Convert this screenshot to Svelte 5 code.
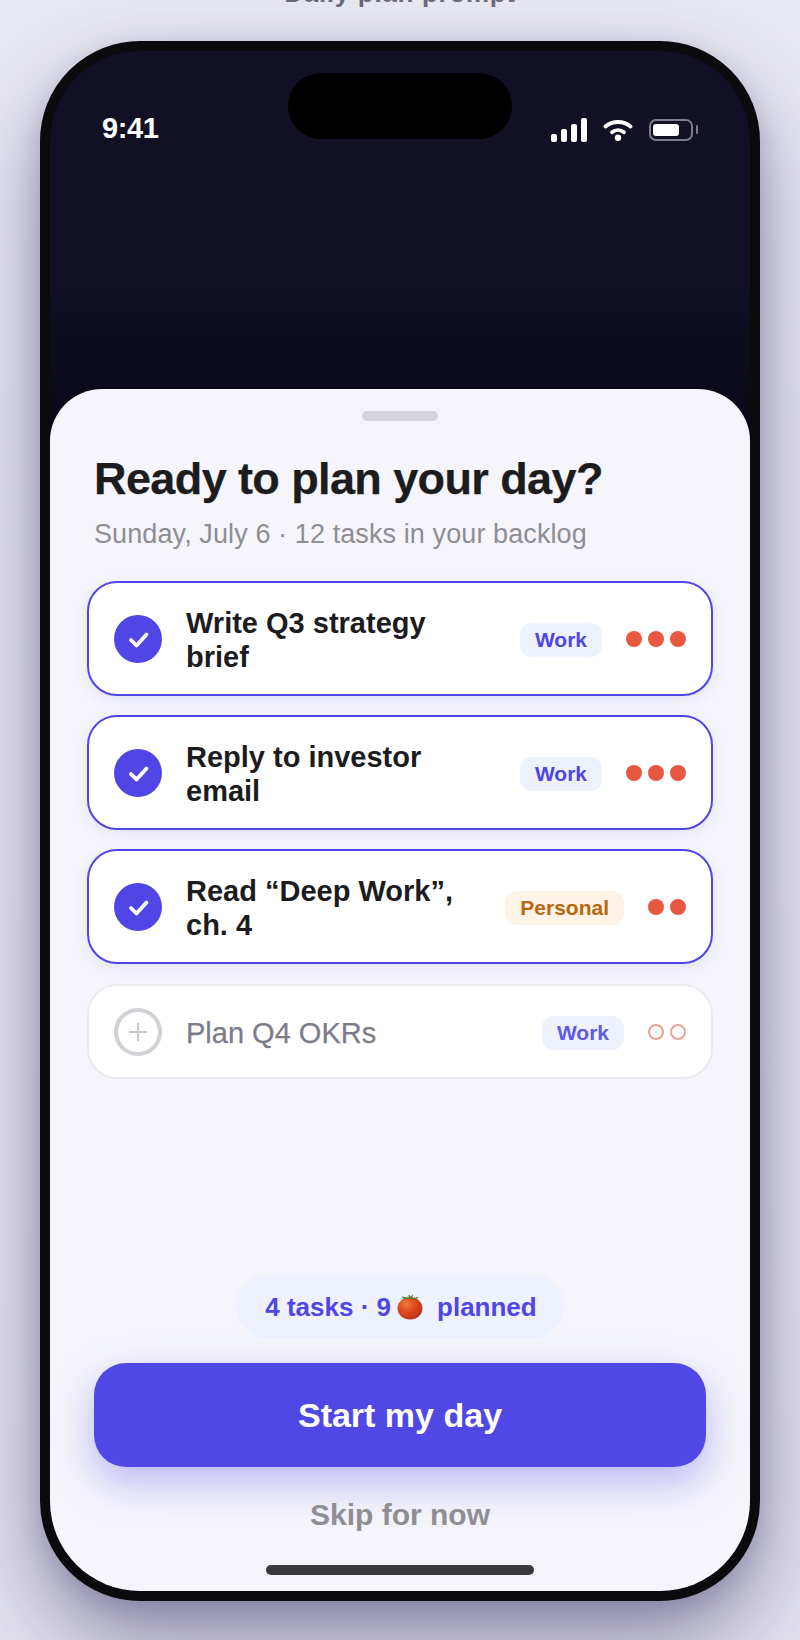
<script>
  const tasks = [
    { title: 'Write Q3 strategy brief', tag: 'Work', kind: 'work', dots: 3, on: true },
    { title: 'Reply to investor email', tag: 'Work', kind: 'work', dots: 3, on: true },
    { title: 'Read “Deep Work”, ch. 4', tag: 'Personal', kind: 'personal', dots: 2, on: true },
    { title: 'Plan Q4 OKRs', tag: 'Work', kind: 'work', dots: 2, on: false }
  ];
</script>

<div class="stage">
  <div class="label">Daily plan prompt</div>
  <div class="phone">
    <div class="island"></div>
    <div class="top">
      <div class="status">
        <span class="time">9:41</span>
        <div class="icons">
          <svg width="36" height="24" viewBox="0 0 36 24" fill="#fff">
            <rect x="0" y="16" width="6" height="8" rx="2" />
            <rect x="10" y="11" width="6" height="13" rx="2" />
            <rect x="20" y="6" width="6" height="18" rx="2" />
            <rect x="30" y="0" width="6" height="24" rx="2" />
          </svg>
          <svg width="30" height="22" viewBox="0 0 30 22" fill="none" stroke="#fff" stroke-width="3.8" stroke-linecap="round">
            <path d="M2.500 7.500C9.500 1.500 20.500 1.500 27.500 7.500" />
            <path d="M9 13.200C12.500 10.300 17.500 10.300 21 13.200" />
            <circle cx="15" cy="18.800" r="3.200" fill="#fff" stroke="none" />
          </svg>
          <svg class="batt" width="50" height="22" viewBox="0 0 50 22" fill="none">
            <rect x="1" y="1" width="42" height="20" rx="6" stroke="#7d7d8a" stroke-width="2" />
            <rect x="4" y="5" width="26" height="12" rx="3" fill="#fff" />
            <rect x="47" y="6" width="2" height="9" rx="1" fill="#7d7d8a" />
          </svg>
        </div>
      </div>
    </div>
    <div class="sheet">
      <div class="handle"></div>
      <h1>Ready to plan your day?</h1>
      <p class="sub">Sunday, July 6 · 12 tasks in your backlog</p>
      <div class="list">
        {#each tasks as t}
          <div class="card" class:on={t.on}>
            <div class="check">
              <svg width="48" height="48" viewBox="0 0 48 48" fill="none">
                {#if t.on}
                  <circle cx="24" cy="24" r="24" fill="#4f46e5" />
                  <path d="M17 25L22.500 30.500L32.500 19.500" stroke="#fff" stroke-width="3.800" stroke-linecap="round" stroke-linejoin="round" />
                {:else}
                  <circle cx="24" cy="24" r="22" stroke="#d1d1d6" stroke-width="4" />
                  <path d="M24 15V33M15 24H33" stroke="#c7c7cc" stroke-width="2" />
                {/if}
              </svg>
            </div>
            <div class="title">{t.title}</div>
            <span class="tag {t.kind}">{t.tag}</span>
            <div class="dots">
              {#each Array(t.dots) as _}<i></i>{/each}
            </div>
          </div>
        {/each}
      </div>
      <div class="pill">
        <span>4 tasks · 9</span>
        <svg class="tomato" width="26" height="26" viewBox="0 0 26 26" fill="none">
          <defs>
            <radialGradient id="tom" cx="0.36" cy="0.32" r="0.78">
              <stop offset="0" stop-color="#f0793a" />
              <stop offset="0.45" stop-color="#dc4a20" />
              <stop offset="0.85" stop-color="#c2351a" />
              <stop offset="1" stop-color="#a42a12" />
            </radialGradient>
          </defs>
          <ellipse cx="13" cy="14.300" rx="12.500" ry="11.200" fill="url(#tom)" />
          <path d="M5.500 3.200Q9.500 5 13 4L15.500 1.800M13 4Q17 5.500 20.500 3.500M13 4L12 1.500" stroke="#3b8a2c" stroke-width="1.300" stroke-linecap="round" />
        </svg>
        <span>planned</span>
      </div>
      <button class="start">Start my day</button>
      <div class="skip">Skip for now</div>
      <div class="home"></div>
    </div>
  </div>
</div>

<style>
  :global(body) {
    margin: 0;
    background: #e9e8f3;
  }
  .stage {
    width: 800px;
    height: 1640px;
    overflow: hidden;
    display: flex;
    flex-direction: column;
    align-items: center;
    font-family: "Liberation Sans", Arial, sans-serif;
    background: linear-gradient(180deg, #eaeaf4 0%, #e4e3ef 100%);
  }
  .label {
    margin-top: -23px;
    height: 32px;
    line-height: 32px;
    margin-bottom: 32px;
    font-size: 26px;
    font-weight: 700;
    letter-spacing: 0.7px;
    color: #6b6b78;
  }
  .phone {
    position: relative;
    flex: none;
    width: 700px;
    height: 1540px;
    border: 10px solid #0b0b0e;
    border-radius: 100px;
    overflow: hidden;
    display: flex;
    flex-direction: column;
    background: #0a0a1c;
    box-shadow: 0 40px 90px rgba(30, 26, 80, 0.45), 0 8px 24px rgba(30, 26, 80, 0.15);
  }
  .island {
    position: absolute;
    top: 22px;
    left: 238px;
    width: 224px;
    height: 66px;
    border-radius: 33px;
    background: #000;
  }
  .top {
    flex: none;
    height: 338px;
    background: linear-gradient(180deg, #111024 0%, #111024 70%, #0a0a1c 100%);
  }
  .status {
    display: flex;
    justify-content: space-between;
    align-items: center;
    padding: 62px 52px 0 52px;
    height: 30px;
    color: #fff;
  }
  .time {
    font-size: 29px;
    font-weight: 700;
    line-height: 30px;
    letter-spacing: -0.4px;
  }
  .icons {
    display: flex;
    align-items: center;
    gap: 16px;
    margin-top: 3px;
  }
  .batt { margin-right: -1px; }
  .sheet {
    flex: 1;
    min-height: 0;
    background: #f5f5fb;
    border-radius: 52px 52px 0 0;
    display: flex;
    flex-direction: column;
    align-items: stretch;
  }
  .handle {
    flex: none;
    width: 76px;
    height: 10px;
    border-radius: 5px;
    background: #d4d4de;
    align-self: center;
    margin-top: 22px;
  }
  h1 {
    margin: 30px 44px 0;
    font-size: 45px;
    line-height: 56px;
    font-weight: 700;
    letter-spacing: -0.6px;
    -webkit-text-stroke: 0.25px #1c1c1e;
    color: #1c1c1e;
  }
  .sub {
    margin: 9px 44px 0;
    font-size: 27px;
    line-height: 36px;
    letter-spacing: 0.1px;
    color: #8e8e93;
  }
  .list {
    display: flex;
    flex-direction: column;
    gap: 19px;
    margin: 29px 37px 0;
  }
  .card {
    box-sizing: border-box;
    display: flex;
    align-items: center;
    padding: 0 25px;
    height: 95px;
    margin-top: 1px;
    border: 2px solid #e9e9ef;
    border-radius: 30px;
    background: #fff;
  }
  .card.on {
    height: 115px;
    margin-top: 0;
    border-color: #4f46e5;
    box-shadow: 0 4px 14px rgba(79, 70, 229, 0.1);
  }
  .check {
    flex: none;
    width: 48px;
    height: 48px;
    margin-right: 24px;
  }
  .check svg { display: block; }
  .title {
    flex: 1;
    min-width: 0;
    padding-top: 2px;
    font-size: 29px;
    line-height: 34px;
    font-weight: 700;
    color: #1c1c1e;
    padding-right: 40px;
  }
  .card:not(.on) .title {
    font-weight: 400;
    -webkit-text-stroke: 0.25px #7c7c88;
    color: #7c7c88;
  }
  .tag {
    flex: none;
    height: 34px;
    line-height: 34px;
    padding: 0 15px;
    border-radius: 12px;
    font-size: 21px;
    font-weight: 700;
    margin-top: 2px;
  }
  .tag.work { background: #eef1fe; color: #4f46e5; }
  .tag.personal { background: #fef3e7; color: #b9670c; }
  .card:not(.on) .tag { color: #6059e8; }
  .dots {
    flex: none;
    display: flex;
    gap: 6px;
    margin-left: 24px;
  }
  .dots i {
    box-sizing: border-box;
    display: block;
    width: 16px;
    height: 16px;
    border-radius: 50%;
    background: #e8573f;
  }
  .card:not(.on) .dots i {
    background: transparent;
    border: 2px solid #e9a594;
  }
  .pill {
    align-self: center;
    margin-top: auto;
    box-sizing: border-box;
    width: 328px;
    height: 66px;
    padding: 3px 0 0 2px;
    border-radius: 33px;
    background: #eef1fe;
    color: #4f46e5;
    font-size: 26px;
    font-weight: 700;
    display: flex;
    align-items: center;
    justify-content: center;
    gap: 6px;
  }
  .tomato { margin-right: 8px; margin-top: -2px; }
  .start {
    display: block;
    flex: none;
    margin: 24px 44px 0;
    height: 104px;
    padding-top: 2px;
    border: 0;
    border-radius: 32px;
    background: #5048e5;
    color: #fff;
    font-family: inherit;
    font-size: 34px;
    font-weight: 700;
    box-shadow: 0 16px 40px rgba(79, 70, 229, 0.35);
  }
  .skip {
    margin-top: 30px;
    text-align: center;
    font-size: 30px;
    line-height: 36px;
    font-weight: 700;
    color: #8e8e93;
  }
  .home {
    flex: none;
    align-self: center;
    width: 268px;
    height: 10px;
    border-radius: 5px;
    background: #3a3a3c;
    margin: 32px 0 16px;
  }
</style>
